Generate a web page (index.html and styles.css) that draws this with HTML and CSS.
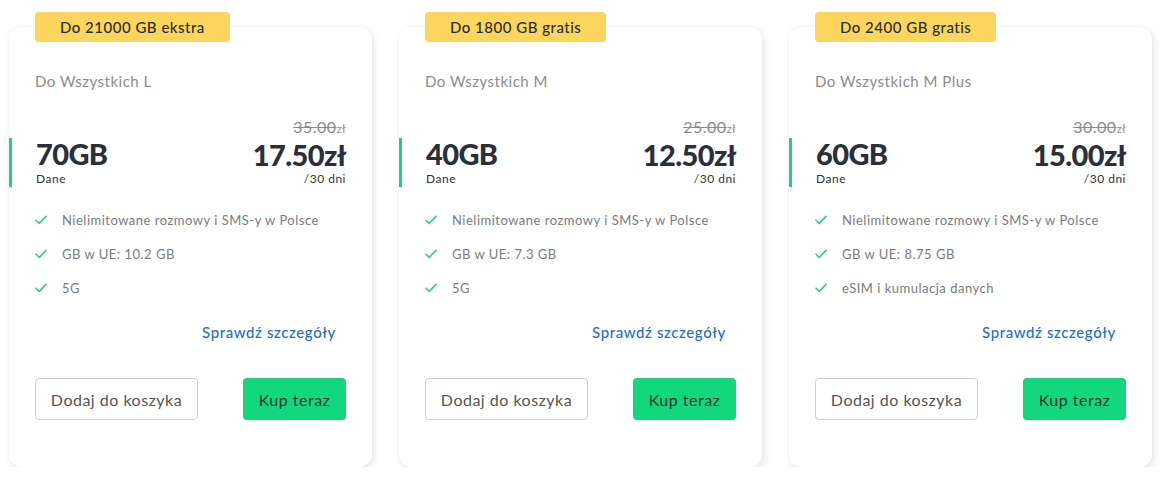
FILE: index.html
```html
<!DOCTYPE html>
<html lang="pl">
<head>
<meta charset="UTF-8">
<meta name="viewport" content="width=device-width, initial-scale=1.0">
<title>Oferty</title>
<link rel="stylesheet" href="styles.css">
</head>
<body>
    <div class="offers">
        <div class="card">
            <div class="badge">Do 21000 GB ekstra</div>
            <div class="plan-name">Do Wszystkich L</div>
            <div class="price-row">
                <div class="data">
                    <div class="big">70GB</div>
                    <div class="small">Dane</div>
                </div>
                <div class="price">
                    <div class="old"><s>35.00</s><span class="cur">zł</span></div>
                    <div class="big">17.50zł</div>
                    <div class="small">/30 dni</div>
                </div>
            </div>
            <ul class="features">
                <li><svg viewBox="0 0 12 10"><path d="M1 5.2 4.3 8.4 11 1.4"/></svg>Nielimitowane rozmowy i SMS-y w Polsce</li>
                <li><svg viewBox="0 0 12 10"><path d="M1 5.2 4.3 8.4 11 1.4"/></svg>GB w UE: 10.2 GB</li>
                <li><svg viewBox="0 0 12 10"><path d="M1 5.2 4.3 8.4 11 1.4"/></svg>5G</li>
            </ul>
            <a class="details" href="#">Sprawdź szczegóły</a>
            <div class="actions">
                <button class="btn btn-cart">Dodaj do koszyka</button>
                <button class="btn btn-buy">Kup teraz</button>
            </div>
        </div>

        <div class="card">
            <div class="badge">Do 1800 GB gratis</div>
            <div class="plan-name">Do Wszystkich M</div>
            <div class="price-row">
                <div class="data">
                    <div class="big">40GB</div>
                    <div class="small">Dane</div>
                </div>
                <div class="price">
                    <div class="old"><s>25.00</s><span class="cur">zł</span></div>
                    <div class="big">12.50zł</div>
                    <div class="small">/30 dni</div>
                </div>
            </div>
            <ul class="features">
                <li><svg viewBox="0 0 12 10"><path d="M1 5.2 4.3 8.4 11 1.4"/></svg>Nielimitowane rozmowy i SMS-y w Polsce</li>
                <li><svg viewBox="0 0 12 10"><path d="M1 5.2 4.3 8.4 11 1.4"/></svg>GB w UE: 7.3 GB</li>
                <li><svg viewBox="0 0 12 10"><path d="M1 5.2 4.3 8.4 11 1.4"/></svg>5G</li>
            </ul>
            <a class="details" href="#">Sprawdź szczegóły</a>
            <div class="actions">
                <button class="btn btn-cart">Dodaj do koszyka</button>
                <button class="btn btn-buy">Kup teraz</button>
            </div>
        </div>

        <div class="card">
            <div class="badge">Do 2400 GB gratis</div>
            <div class="plan-name">Do Wszystkich M Plus</div>
            <div class="price-row">
                <div class="data">
                    <div class="big">60GB</div>
                    <div class="small">Dane</div>
                </div>
                <div class="price">
                    <div class="old"><s>30.00</s><span class="cur">zł</span></div>
                    <div class="big">15.00zł</div>
                    <div class="small">/30 dni</div>
                </div>
            </div>
            <ul class="features">
                <li><svg viewBox="0 0 12 10"><path d="M1 5.2 4.3 8.4 11 1.4"/></svg>Nielimitowane rozmowy i SMS-y w Polsce</li>
                <li><svg viewBox="0 0 12 10"><path d="M1 5.2 4.3 8.4 11 1.4"/></svg>GB w UE: 8.75 GB</li>
                <li><svg viewBox="0 0 12 10"><path d="M1 5.2 4.3 8.4 11 1.4"/></svg>eSIM i kumulacja danych</li>
            </ul>
            <a class="details" href="#">Sprawdź szczegóły</a>
            <div class="actions">
                <button class="btn btn-cart">Dodaj do koszyka</button>
                <button class="btn btn-buy">Kup teraz</button>
            </div>
        </div>
    </div>
</body>
</html>
```

FILE: styles.css
```css
/* offer cards */
body {
    margin: 0;
    background: #fff;
    font-family: Lato, "Open Sans", sans-serif;
    color: #2b2f3a;
    letter-spacing: 0.5px;
}

.offers {
    display: flex;
    gap: 27px;
    padding: 27px 0 0 9px;
}

.card {
    position: relative;
    box-sizing: border-box;
    width: 363px;
    height: 440px;
    padding: 44px 26px 0 26px;
    background: #fff;
    border-radius: 12px;
    box-shadow: 2px 3px 8px rgba(0, 0, 0, 0.10), 0 0 2px rgba(0, 0, 0, 0.06);
    display: flex;
    flex-direction: column;
}

/* yellow ribbon sitting on the top edge */
.badge {
    position: absolute;
    top: -15px;
    left: 26px;
    height: 30px;
    line-height: 30px;
    padding: 0 25px;
    background: #fcd65c;
    border-radius: 4px;
    font-size: 15px;
    font-weight: 500;
    color: #2d2d2d;
}

.plan-name {
    font-size: 15px;
    line-height: 20px;
    color: #8c8c8c;
}

.price-row {
    display: flex;
    justify-content: space-between;
    align-items: flex-end;
    margin-top: 26px;
}

.data {
    margin-left: -26px;
    padding-left: 24px;
    border-left: 3px solid #1fd07f;
}

.big {
    font-size: 29px;
    font-weight: 900;
    line-height: 32px;
    letter-spacing: -0.6px;
    color: #2b2f3a;
}

.small {
    font-size: 12px;
    line-height: 17px;
    color: #333;
}

.price {
    text-align: right;
}

.price .big {
    line-height: 30px;
}

.old {
    font-size: 16px;
    line-height: 20px;
    color: #8c8c8c;
    margin-bottom: 1px;
}

.old .cur {
    font-size: 11px;
}

.features {
    list-style: none;
    margin: 23px 0 0 0;
    padding: 0;
}

.features li {
    display: flex;
    align-items: center;
    font-size: 13px;
    line-height: 20px;
    color: #7b7b7b;
    margin-bottom: 14px;
}

.features svg {
    width: 12px;
    height: 10px;
    margin-right: 15px;
    fill: none;
    stroke: #2dcf8a;
    stroke-width: 1.6;
    stroke-linecap: round;
    stroke-linejoin: round;
}

.details {
    align-self: flex-end;
    margin: 10px 10px 0 0;
    font-size: 15px;
    line-height: 20px;
    font-weight: 500;
    letter-spacing: 0.6px;
    color: #1f6fc6;
    text-decoration: none;
}

.actions {
    display: flex;
    justify-content: space-between;
    margin-top: 36px;
}

.btn {
    height: 42px;
    border-radius: 4px;
    font-family: Lato, "Open Sans", sans-serif;
    font-size: 16px;
    letter-spacing: 0.5px;
    cursor: pointer;
}

.btn-cart {
    width: 163px;
    background: #fff;
    border: 1px solid #cfcfcf;
    color: #555;
}

.btn-buy {
    width: 103px;
    background: #12d77d;
    border: none;
    color: #1d3b2c;
}
```
